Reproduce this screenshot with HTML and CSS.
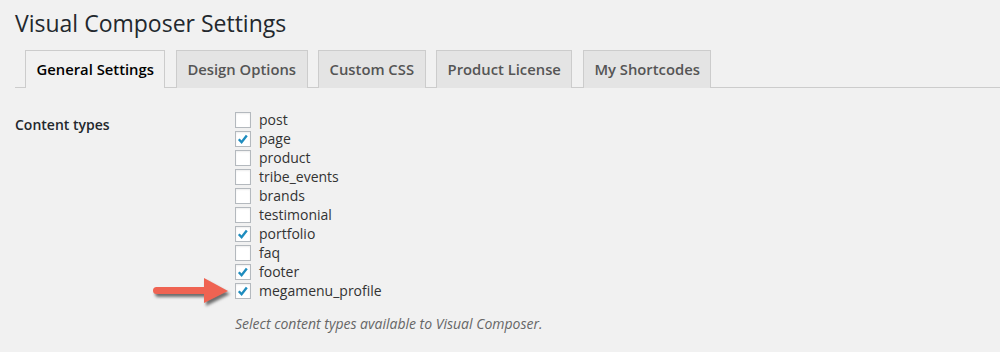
FILE: index.html
```html
<!DOCTYPE html>
<html lang="en">
<head>
<meta charset="utf-8">
<title>Visual Composer Settings</title>
<link rel="stylesheet" href="styles.css">
</head>
<body>
<div class="wrap">
  <h1 class="page-title">Visual Composer Settings</h1>
  <nav class="tabs">
    <a class="tab tab-active">General Settings</a>
    <a class="tab">Design Options</a>
    <a class="tab">Custom CSS</a>
    <a class="tab">Product License</a>
    <a class="tab">My Shortcodes</a>
  </nav>
  <div class="settings">
    <div class="field-label">Content types</div>
    <div class="field">
      <ul class="checklist">
        <li class="check-row"><span class="box"></span><span class="check-text">post</span></li>
        <li class="check-row"><span class="box"><svg class="tick" viewBox="0 0 16 16"><path d="M3.8 8.2 L6.6 11.2 L11.8 4.6"/></svg></span><span class="check-text">page</span></li>
        <li class="check-row"><span class="box"></span><span class="check-text">product</span></li>
        <li class="check-row"><span class="box"></span><span class="check-text">tribe_events</span></li>
        <li class="check-row"><span class="box"></span><span class="check-text">brands</span></li>
        <li class="check-row"><span class="box"></span><span class="check-text">testimonial</span></li>
        <li class="check-row"><span class="box"><svg class="tick" viewBox="0 0 16 16"><path d="M3.8 8.2 L6.6 11.2 L11.8 4.6"/></svg></span><span class="check-text">portfolio</span></li>
        <li class="check-row"><span class="box"></span><span class="check-text">faq</span></li>
        <li class="check-row"><span class="box"><svg class="tick" viewBox="0 0 16 16"><path d="M3.8 8.2 L6.6 11.2 L11.8 4.6"/></svg></span><span class="check-text">footer</span></li>
        <li class="check-row"><span class="box"><svg class="tick" viewBox="0 0 16 16"><path d="M3.8 8.2 L6.6 11.2 L11.8 4.6"/></svg></span><span class="check-text">megamenu_profile</span></li>
      </ul>
      <p class="description">Select content types available to Visual Composer.</p>
    </div>
  </div>
  <svg class="annotation-arrow" viewBox="0 0 90 34" width="90" height="34">
    <line x1="7.5" y1="16.5" x2="58" y2="16.5" stroke="#ef6352" stroke-width="7" stroke-linecap="round"/>
    <polygon points="55,4 79,17 55,29" fill="#ef6352"/>
  </svg>
</div>
</body>
</html>
```

FILE: styles.css
```css
html, body {
  margin: 0;
  padding: 0;
  background: #f1f1f1;
}
body {
  font-family: "Open Sans", "Liberation Sans", sans-serif;
  font-size: 14px;
  color: #444;
}
.wrap {
  position: relative;
  padding: 0 0 0 15px;
  height: 352px;
  overflow: hidden;
}
.page-title {
  margin: 0;
  padding-top: 9px;
  font-size: 23px;
  line-height: 29px;
  font-weight: 400;
  color: #23282d;
}
.tabs {
  display: flex;
  gap: 10.5px;
  margin-top: 12px;
  padding-left: 10px;
  border-bottom: 1px solid #ccc;
  height: 37px;
}
.tab {
  display: block;
  box-sizing: border-box;
  height: 38px;
  padding: 6px 10.5px 0;
  border: 1px solid #ccc;
  border-bottom: none;
  background: #e4e4e4;
  color: #555;
  font-size: 14.8px;
  font-weight: 600;
  line-height: 24px;
}
.tab-active {
  background: #f1f1f1;
  color: #000;
}
.settings {
  display: grid;
  grid-template-columns: 220px auto;
  margin-top: 22px;
}
.field-label {
  padding-top: 5px;
  line-height: 20px;
  font-weight: 600;
  color: #23282d;
}
.checklist {
  list-style: none;
  margin: 0;
  padding: 0;
}
.check-row {
  display: flex;
  align-items: center;
  height: 19px;
}
.box {
  box-sizing: border-box;
  width: 16px;
  height: 16px;
  border: 1px solid #b4b9be;
  background: #fff;
  box-shadow: inset 0 1px 2px rgba(0, 0, 0, 0.07);
  margin-right: 8px;
  position: relative;
}
.tick {
  position: absolute;
  left: -1px;
  top: -1px;
  width: 16px;
  height: 16px;
}
.tick path {
  fill: none;
  stroke: #1e8cbe;
  stroke-width: 2.4;
}
.check-text {
  line-height: 19px;
  color: #333;
}
.description {
  margin: 14px 0 0;
  font-size: 14px;
  line-height: 19px;
  font-style: italic;
  color: #666;
}
.annotation-arrow {
  position: absolute;
  left: 149px;
  top: 274px;
  filter: drop-shadow(2px 3px 1.5px rgba(0, 0, 0, 0.55));
}
```
